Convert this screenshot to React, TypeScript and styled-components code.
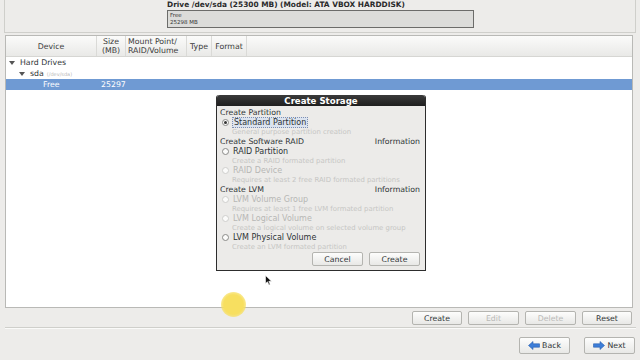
import React from "react";
import styled, { createGlobalStyle } from "styled-components";

const Global = createGlobalStyle`
  html, body { margin: 0; padding: 0; background: #edecea; }
  body { font-family: "DejaVu Sans", "Liberation Sans", sans-serif; color: #2e3436; }
  * { box-sizing: border-box; }
`;

const Screen = styled.div`
  position: relative;
  width: 640px;
  height: 360px;
  overflow: hidden;
  background: #edecea;
  display: flex;
  flex-direction: column;
`;

const TopPanel = styled.div`
  margin: 0 4px;
  height: 33px;
  border: 1px solid #cfcfcb;
  border-top: none;
  padding: 1px 0 0 162px;
  display: flex;
  flex-direction: column;
  gap: 1px;
`;

const DriveLabel = styled.div`
  font-size: 7.4px;
  font-weight: bold;
  line-height: 8px;
  color: #2a2a2a;
`;

const DriveBar = styled.div`
  width: 307px;
  height: 18px;
  border: 1px solid #6c6c6a;
  background: #dcdcda;
  padding: 1px 2px;
  font-size: 5.5px;
  line-height: 7px;
  color: #333;
`;

const TableFrame = styled.div`
  margin: 2px 7px 0 5px;
  height: 273px;
  border: 1px solid #b9b9b6;
  background: #ffffff;
  display: flex;
  flex-direction: column;
`;

const HeaderRow = styled.div`
  display: flex;
  height: 21px;
  background: linear-gradient(#fbfbfa, #e9e9e7);
  border-bottom: 1px solid #d6d6d3;
`;

const HeaderCell = styled.div<{ $w: number; $align?: string }>`
  width: ${(p) => p.$w}px;
  border-right: 1px solid #dadad7;
  display: flex;
  align-items: center;
  justify-content: ${(p) => p.$align || "center"};
  padding: 0 2px;
  font-size: 7.8px;
  line-height: 9px;
  color: #3a3a3a;
  white-space: nowrap;
  text-align: ${(p) => (p.$align === "flex-start" ? "left" : "center")};
`;

const TreeRow = styled.div<{ $indent: number; $selected?: boolean }>`
  display: flex;
  align-items: center;
  height: 11px;
  padding-left: ${(p) => p.$indent}px;
  font-size: 7.8px;
  background: ${(p) => (p.$selected ? "#6f9ad3" : "transparent")};
  color: ${(p) => (p.$selected ? "#ffffff" : "#2e3436")};
`;

const Triangle = styled.span`
  display: inline-block;
  width: 0;
  height: 0;
  border-left: 3px solid transparent;
  border-right: 3px solid transparent;
  border-top: 4px solid #555;
  margin-right: 5px;
`;

const Dim = styled.span`
  color: #b8b8b8;
  font-size: 5px;
  margin-left: 3px;
`;

const Cell = styled.span<{ $w: number }>`
  display: inline-block;
  width: ${(p) => p.$w}px;
`;

const ButtonRow = styled.div<{ $top: number; $gap: number; $right: number }>`
  display: flex;
  justify-content: flex-end;
  gap: ${(p) => p.$gap}px;
  margin-top: ${(p) => p.$top}px;
  padding-right: ${(p) => p.$right}px;
`;

const Button = styled.div<{ $w: number; $h: number; $disabled?: boolean }>`
  width: ${(p) => p.$w}px;
  height: ${(p) => p.$h}px;
  border: 1px solid #b4b4b0;
  border-radius: 2px;
  background: linear-gradient(#fdfdfc, #e8e8e6);
  display: flex;
  align-items: center;
  justify-content: center;
  gap: 2px;
  font-size: 7.8px;
  color: ${(p) => (p.$disabled ? "#b9b9b7" : "#2e3436")};
`;

const Separator = styled.div`
  margin: 2px 4px 0 5px;
  height: 1px;
  background: #cfcfcb;
  box-shadow: 0 1px 0 #fafaf9;
`;

const Dialog = styled.div`
  position: absolute;
  left: 216px;
  top: 95px;
  width: 210px;
  height: 176px;
  background: #ecebe9;
  border: 1px solid #2d2d2d;
  border-top: none;
  border-radius: 3px 3px 0 0;
  display: flex;
  flex-direction: column;
`;

const TitleBar = styled.div`
  height: 11px;
  background: linear-gradient(#3a3a3a, #1f1f1f);
  border-radius: 3px 3px 0 0;
  color: #fff;
  font-size: 8.6px;
  font-weight: bold;
  display: flex;
  align-items: center;
  justify-content: center;
`;

const DialogBody = styled.div`
  padding: 1px 5px 0 3px;
  display: flex;
  flex-direction: column;
`;

const Section = styled.div`
  display: flex;
  justify-content: space-between;
  font-size: 7.8px;
  height: 10px;
  align-items: center;
  color: #2e3436;
  white-space: nowrap;
`;

const Option = styled.div<{ $disabled?: boolean }>`
  display: flex;
  align-items: center;
  height: 10px;
  padding-left: 2px;
  font-size: 8px;
  white-space: nowrap;
  color: ${(p) => (p.$disabled ? "#b7b7b5" : "#2e3436")};
`;

const Radio = styled.span<{ $checked?: boolean; $disabled?: boolean }>`
  width: 7px;
  height: 7px;
  border-radius: 50%;
  border: 1px solid ${(p) => (p.$disabled ? "#cfcfcd" : "#8a8a88")};
  background: #fbfbfa;
  margin-right: 4px;
  display: flex;
  align-items: center;
  justify-content: center;
  &::after {
    content: "";
    width: 3px;
    height: 3px;
    border-radius: 50%;
    background: ${(p) => (p.$checked ? "#333" : "transparent")};
  }
`;

const Focus = styled.span`
  border: 1px dotted #7f8fb0;
  background: #dbe3ef;
  padding: 0 1px;
  line-height: 9px;
  margin-left: -1px;
`;

const Hint = styled.div`
  height: 9px;
  padding-left: 12px;
  font-size: 6.9px;
  color: #c6c6c4;
  display: flex;
  align-items: center;
  white-space: nowrap;
`;

const DialogButtons = styled.div`
  display: flex;
  justify-content: flex-end;
  gap: 6px;
  margin-top: 1px;
`;

const Highlight = styled.div`
  position: absolute;
  left: 221px;
  top: 292px;
  width: 25px;
  height: 25px;
  border-radius: 50%;
  background: radial-gradient(circle, #f7df60 55%, rgba(247, 223, 96, 0.6) 75%, rgba(247, 223, 96, 0) 100%);
`;

const Cursor = styled.svg`
  position: absolute;
  left: 265px;
  top: 275px;
`;

const Arrow = ({ dir }: { dir: "left" | "right" }) => (
  <svg width="12" height="9" viewBox="0 0 12 9">
    {dir === "left" ? (
      <path d="M0.5 4.5 L5 0.5 L5 2.8 L11.5 2.8 L11.5 6.2 L5 6.2 L5 8.5 Z" fill="#3d7ed8" stroke="#2a5fae" strokeWidth="0.6" />
    ) : (
      <path d="M11.5 4.5 L7 0.5 L7 2.8 L0.5 2.8 L0.5 6.2 L7 6.2 L7 8.5 Z" fill="#3d7ed8" stroke="#2a5fae" strokeWidth="0.6" />
    )}
  </svg>
);

export default function App() {
  return (
    <>
      <Global />
      <Screen>
        <TopPanel>
          <DriveLabel>Drive /dev/sda (25300 MB) (Model: ATA VBOX HARDDISK)</DriveLabel>
          <DriveBar>
            Free
            <br />
            25298 MB
          </DriveBar>
        </TopPanel>

        <TableFrame>
          <HeaderRow>
            <HeaderCell $w={91}>Device</HeaderCell>
            <HeaderCell $w={29}>
              Size
              <br />
              (MB)
            </HeaderCell>
            <HeaderCell $w={61} $align="flex-start">
              Mount Point/
              <br />
              RAID/Volume
            </HeaderCell>
            <HeaderCell $w={25}>Type</HeaderCell>
            <HeaderCell $w={35}>Format</HeaderCell>
          </HeaderRow>
          <TreeRow $indent={3}>
            <Triangle />
            Hard Drives
          </TreeRow>
          <TreeRow $indent={13}>
            <Triangle />
            sda<Dim>(/dev/sda)</Dim>
          </TreeRow>
          <TreeRow $indent={37} $selected>
            <Cell $w={58}>Free</Cell>
            25297
          </TreeRow>
        </TableFrame>

        <ButtonRow $top={3} $gap={6} $right={8}>
          <Button $w={50} $h={14}>Create</Button>
          <Button $w={51} $h={14} $disabled>Edit</Button>
          <Button $w={51} $h={14} $disabled>Delete</Button>
          <Button $w={50} $h={14}>Reset</Button>
        </ButtonRow>
        <Separator />
        <ButtonRow $top={9} $gap={14} $right={5}>
          <Button $w={51} $h={17}>
            <Arrow dir="left" />
            Back
          </Button>
          <Button $w={51} $h={17}>
            <Arrow dir="right" />
            Next
          </Button>
        </ButtonRow>

        <Dialog>
          <TitleBar>Create Storage</TitleBar>
          <DialogBody>
            <Section>Create Partition</Section>
            <Option>
              <Radio $checked />
              <Focus>Standard Partition</Focus>
            </Option>
            <Hint>General purpose partition creation</Hint>
            <Section>
              <span>Create Software RAID</span>
              <span>Information</span>
            </Section>
            <Option>
              <Radio />
              RAID Partition
            </Option>
            <Hint>Create a RAID formated partition</Hint>
            <Option $disabled>
              <Radio $disabled />
              RAID Device
            </Option>
            <Hint>Requires at least 2 free RAID formated partitions</Hint>
            <Section>
              <span>Create LVM</span>
              <span>Information</span>
            </Section>
            <Option $disabled>
              <Radio $disabled />
              LVM Volume Group
            </Option>
            <Hint>Requires at least 1 free LVM formated partition</Hint>
            <Option $disabled>
              <Radio $disabled />
              LVM Logical Volume
            </Option>
            <Hint>Create a logical volume on selected volume group</Hint>
            <Option>
              <Radio />
              LVM Physical Volume
            </Option>
            <Hint>Create an LVM formated partition</Hint>
            <DialogButtons>
              <Button $w={51} $h={14}>Cancel</Button>
              <Button $w={51} $h={14}>Create</Button>
            </DialogButtons>
          </DialogBody>
        </Dialog>

        <Highlight />
        <Cursor width="8" height="11" viewBox="0 0 8 11">
          <path d="M0.5 0.5 L0.5 8.5 L2.5 6.8 L4 10 L5.2 9.4 L3.8 6.3 L6.5 6.2 Z" fill="#111" stroke="#fff" strokeWidth="0.6" />
        </Cursor>
      </Screen>
    </>
  );
}
